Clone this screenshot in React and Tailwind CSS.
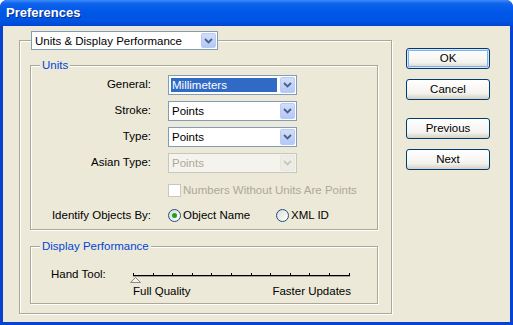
import React from 'react';

function Chevron({ color = '#4D6185' }) {
    return (
        <svg width="9" height="6" viewBox="0 0 9 6">
            <path d="M1 1 L4.5 4.5 L8 1" fill="none" stroke={color} strokeWidth="1.8" />
        </svg>
    );
}

function Combo({ value, className, selected, disabled }) {
    return (
        <div
            className={
                'flex border ' +
                (disabled ? 'border-[#C9C7BA] bg-[#F4F3EE] text-[#ACA899] ' : 'border-[#7F9DB9] bg-white text-black ') +
                className
            }
        >
            <div className="flex flex-1 items-center p-[2px]">
                <span
                    className={
                        'flex h-full flex-1 items-center pl-[1px] leading-[14px] ' +
                        (selected ? 'bg-[#316AC5] text-white' : '')
                    }
                >
                    {value}
                </span>
            </div>
            <div
                className={
                    'm-[1px] flex w-[15px] items-center justify-center rounded-[2px] border ' +
                    (disabled
                        ? 'border-[#E8E7DF] bg-[#EEEDE5]'
                        : 'border-[#BACAF4] bg-[linear-gradient(to_bottom,#D2DEFB,#B3C8F6)]')
                }
            >
                <Chevron color={disabled ? '#C9C7BA' : '#4D6185'} />
            </div>
        </div>
    );
}

function Button({ children, isDefault }) {
    return (
        <div
            className={
                'flex h-[21px] w-[84px] items-center justify-center rounded-[3px] border border-[#003C74] bg-[linear-gradient(to_bottom,#FFFFFF,#F4F3EE_70%,#D6D0C5)] text-black ' +
                (isDefault ? 'shadow-[inset_0_0_0_1px_#CEE7FF,inset_0_0_0_2px_#89ADE4]' : '')
            }
        >
            {children}
        </div>
    );
}

function Radio({ checked }) {
    return (
        <span className="flex h-[13px] w-[13px] items-center justify-center rounded-full border border-[#1C5180] bg-[linear-gradient(135deg,#DCDBD3,#FFFFFF)]">
            {checked && <span className="h-[5px] w-[5px] rounded-full bg-[#21A121]" />}
        </span>
    );
}

function Row({ label, children }) {
    return (
        <div className="flex items-center">
            <div className="w-[137px] pr-[17px] text-right text-black">{label}</div>
            {children}
        </div>
    );
}

export default function App() {
    const ticks = Array.from({ length: 12 }, (_, i) => 5 + Math.round(i * 19.6));

    return (
        <div className="flex h-[325px] w-[513px] flex-col overflow-hidden rounded-t-[7px] bg-[#0842D0] font-['Liberation_Sans',Arial,sans-serif] text-[11.5px]">
            {/* Title bar */}
            <div className="flex h-[26px] items-center bg-[linear-gradient(to_bottom,#3C8CFB_0%,#0F64EC_14%,#0058E8_45%,#0054E3_80%,#0046D2_100%)] pl-[6px]">
                <span className="text-[13px] font-bold text-white [text-shadow:1px_1px_0_#0A2B8C]">Preferences</span>
            </div>

            <div className="mx-[3px] mb-[3px] flex flex-1 bg-[#ECE9D8]">
                {/* Main group */}
                <div className="ml-[16px] mt-[14px] h-[274px] w-[373px] border border-[#ACA899] shadow-[inset_1px_1px_0_#FFFFFF,1px_1px_0_#FFFFFF]">
                    <Combo value="Units & Display Performance" className="-mt-[10px] ml-[11px] h-[19px] w-[187px]" />

                    {/* Units group */}
                    <div className="ml-[10px] mt-[15px] h-[165px] w-[348px] border border-[#ACA899] shadow-[inset_1px_1px_0_#FFFFFF,1px_1px_0_#FFFFFF]">
                        <div className="-mt-[8px] ml-[9px] w-fit bg-[#ECE9D8] px-[2px] leading-[14px] text-[#0046D5]">
                            Units
                        </div>
                        <div className="mt-[3px] flex flex-col gap-[6px]">
                            <Row label="General:">
                                <Combo value="Millimeters" selected className="h-[20px] w-[129px]" />
                            </Row>
                            <Row label="Stroke:">
                                <Combo value="Points" className="h-[20px] w-[129px]" />
                            </Row>
                            <Row label="Type:">
                                <Combo value="Points" className="h-[20px] w-[129px]" />
                            </Row>
                            <Row label="Asian Type:">
                                <Combo value="Points" disabled className="h-[20px] w-[129px]" />
                            </Row>
                        </div>
                        <div className="mt-[10px] flex items-center pl-[137px] leading-[14px] text-[#ACA899]">
                            <span className="h-[13px] w-[13px] border border-[#C9C7BA] bg-white" />
                            <span className="ml-[2px]">Numbers Without Units Are Points</span>
                        </div>
                        <div className="mt-[10px]">
                            <Row label="Identify Objects By:">
                                <div className="flex w-[108px] items-center gap-[2px]">
                                    <Radio checked />
                                    <span>Object Name</span>
                                </div>
                                <div className="flex items-center gap-[2px]">
                                    <Radio />
                                    <span>XML ID</span>
                                </div>
                            </Row>
                        </div>
                    </div>

                    {/* Display Performance group */}
                    <div className="ml-[10px] mt-[16px] h-[58px] w-[348px] border border-[#ACA899] shadow-[inset_1px_1px_0_#FFFFFF,1px_1px_0_#FFFFFF]">
                        <div className="-mt-[8px] ml-[9px] w-fit bg-[#ECE9D8] px-[2px] leading-[14px] text-[#0046D5]">
                            Display Performance
                        </div>
                        <div className="mt-[14px] flex pl-[20px]">
                            <div className="w-[77px] leading-[14px]">Hand Tool:</div>
                            <div className="flex flex-col">
                                <svg width="230" height="17" viewBox="0 0 230 17">
                                    <line x1="5" y1="8.5" x2="222" y2="8.5" stroke="#000" strokeWidth="1" />
                                    <line x1="5" y1="9.5" x2="222" y2="9.5" stroke="#A0A0A0" strokeWidth="1" />
                                    {ticks.map((x) => (
                                        <line key={x} x1={x + 0.5} y1="6" x2={x + 0.5} y2="9" stroke="#000" strokeWidth="1" />
                                    ))}
                                    <polygon points="7.5,10.5 2.5,15.5 12.5,15.5" fill="#F4F3EE" stroke="#8C8A80" strokeWidth="1" />
                                </svg>
                                <div className="ml-[5px] flex w-[218px] justify-between leading-[14px]">
                                    <span>Full Quality</span>
                                    <span>Faster Updates</span>
                                </div>
                            </div>
                        </div>
                    </div>
                </div>

                {/* Buttons */}
                <div className="ml-[14px] mt-[22px] flex flex-col">
                    <Button isDefault>OK</Button>
                    <div className="mt-[10px]">
                        <Button>Cancel</Button>
                    </div>
                    <div className="mt-[18px]">
                        <Button>Previous</Button>
                    </div>
                    <div className="mt-[10px]">
                        <Button>Next</Button>
                    </div>
                </div>
            </div>
        </div>
    );
}
